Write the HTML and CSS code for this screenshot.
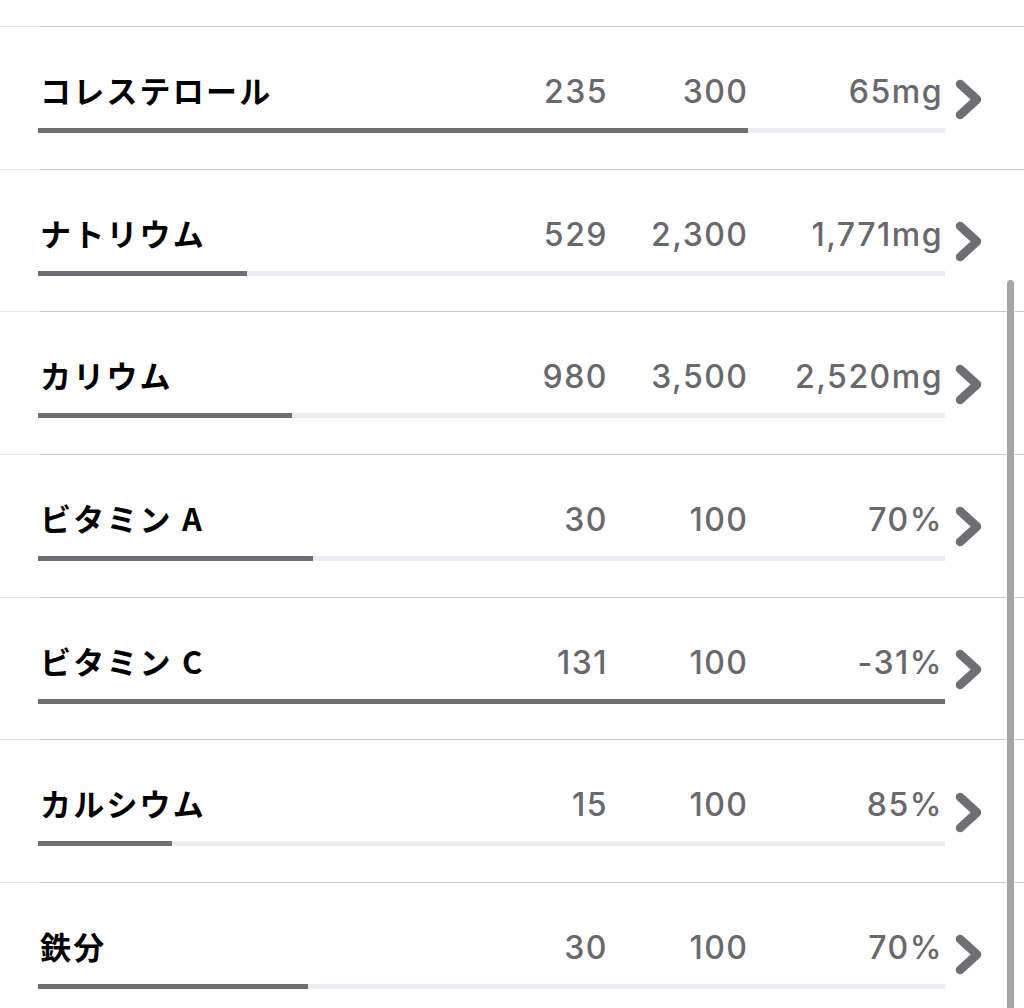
FILE: index.html
```html
<!DOCTYPE html>
<html lang="ja">
<head>
<meta charset="utf-8">
<link rel="stylesheet" href="styles.css">
</head>
<body>
<div class="list">
  <div class="top-space"></div>

  <div class="row">
    <div class="sep"></div>
    <div class="main">
      <div class="label">コレステロール</div>
      <div class="num c1">235</div>
      <div class="num c2">300</div>
      <div class="num c3">65mg</div>
      <svg class="chev" viewBox="0 0 29 43" width="29" height="43"><path d="M7 6 L24 21.5 L7 37"/></svg>
    </div>
    <div class="track"><div class="fill" style="width:78.3%"></div></div>
  </div>

  <div class="row">
    <div class="sep"></div>
    <div class="main">
      <div class="label">ナトリウム</div>
      <div class="num c1">529</div>
      <div class="num c2">2,300</div>
      <div class="num c3">1,771mg</div>
      <svg class="chev" viewBox="0 0 29 43" width="29" height="43"><path d="M7 6 L24 21.5 L7 37"/></svg>
    </div>
    <div class="track"><div class="fill" style="width:23%"></div></div>
  </div>

  <div class="row">
    <div class="sep"></div>
    <div class="main">
      <div class="label">カリウム</div>
      <div class="num c1">980</div>
      <div class="num c2">3,500</div>
      <div class="num c3">2,520mg</div>
      <svg class="chev" viewBox="0 0 29 43" width="29" height="43"><path d="M7 6 L24 21.5 L7 37"/></svg>
    </div>
    <div class="track"><div class="fill" style="width:28%"></div></div>
  </div>

  <div class="row">
    <div class="sep"></div>
    <div class="main">
      <div class="label">ビタミン A</div>
      <div class="num c1">30</div>
      <div class="num c2">100</div>
      <div class="num c3">70%</div>
      <svg class="chev" viewBox="0 0 29 43" width="29" height="43"><path d="M7 6 L24 21.5 L7 37"/></svg>
    </div>
    <div class="track"><div class="fill" style="width:30.3%"></div></div>
  </div>

  <div class="row">
    <div class="sep"></div>
    <div class="main">
      <div class="label">ビタミン C</div>
      <div class="num c1">131</div>
      <div class="num c2">100</div>
      <div class="num c3">-31%</div>
      <svg class="chev" viewBox="0 0 29 43" width="29" height="43"><path d="M7 6 L24 21.5 L7 37"/></svg>
    </div>
    <div class="track"><div class="fill" style="width:100%"></div></div>
  </div>

  <div class="row">
    <div class="sep"></div>
    <div class="main">
      <div class="label">カルシウム</div>
      <div class="num c1">15</div>
      <div class="num c2">100</div>
      <div class="num c3">85%</div>
      <svg class="chev" viewBox="0 0 29 43" width="29" height="43"><path d="M7 6 L24 21.5 L7 37"/></svg>
    </div>
    <div class="track"><div class="fill" style="width:14.8%"></div></div>
  </div>

  <div class="row">
    <div class="sep"></div>
    <div class="main">
      <div class="label">鉄分</div>
      <div class="num c1">30</div>
      <div class="num c2">100</div>
      <div class="num c3">70%</div>
      <svg class="chev" viewBox="0 0 29 43" width="29" height="43"><path d="M7 6 L24 21.5 L7 37"/></svg>
    </div>
    <div class="track"><div class="fill" style="width:29.8%"></div></div>
  </div>
</div>
<div class="scrollbar"></div>
</body>
</html>
```

FILE: styles.css
```css
html, body {
  margin: 0;
  padding: 0;
  background: #ffffff;
  overflow: hidden;
}
body {
  width: 1024px;
  height: 1008px;
  position: relative;
  font-family: "Inter", "Noto Sans CJK JP", sans-serif;
}
.list {
  display: flex;
  flex-direction: column;
}
.top-space {
  height: 26px;
  flex: none;
}
.row {
  height: 142.67px;
  flex: none;
  display: flex;
  flex-direction: column;
}
.sep {
  height: 1px;
  background: linear-gradient(to right, #e6e6e6 40px, #c8c8ca 40px);
}
.main {
  margin-top: 45px;
  height: 40px;
  display: flex;
  align-items: center;
  padding-left: 40px;
  padding-right: 42px;
}
.label {
  flex: 1;
  min-width: 0;
  font-family: "Noto Sans CJK JP", sans-serif;
  font-weight: 700;
  font-size: 31px;
  letter-spacing: 2.2px;
  color: #000;
  line-height: 40px;
  padding-bottom: 4px;
  white-space: nowrap;
}
.num {
  flex: none;
  font-family: "Inter", sans-serif;
  font-weight: 500;
  font-size: 32px;
  color: #68686d;
  text-align: right;
  line-height: 40px;
  white-space: nowrap;
  letter-spacing: 1.5px;
  margin-right: -1.5px;
}
.c1 { width: 200px; }
.c2 { width: 142px; }
.c3 { width: 196px; }
.chev {
  flex: none;
  margin-left: 11.5px;
  margin-top: 14px;
}
.chev path {
  fill: none;
  stroke: #6e6e73;
  stroke-width: 8.5;
  stroke-linecap: round;
  stroke-linejoin: round;
}
.track {
  margin-top: 16px;
  margin-left: 38px;
  width: 907px;
  height: 5px;
  background: #ebebf0;
}
.fill {
  height: 100%;
  background: #6e6e73;
}
.scrollbar {
  position: absolute;
  left: 1007px;
  top: 280px;
  width: 7px;
  height: 740px;
  border-radius: 4px;
  background: #a6a6a6;
  box-shadow: 0 0 0 1px rgba(255,255,255,0.8);
}
```
